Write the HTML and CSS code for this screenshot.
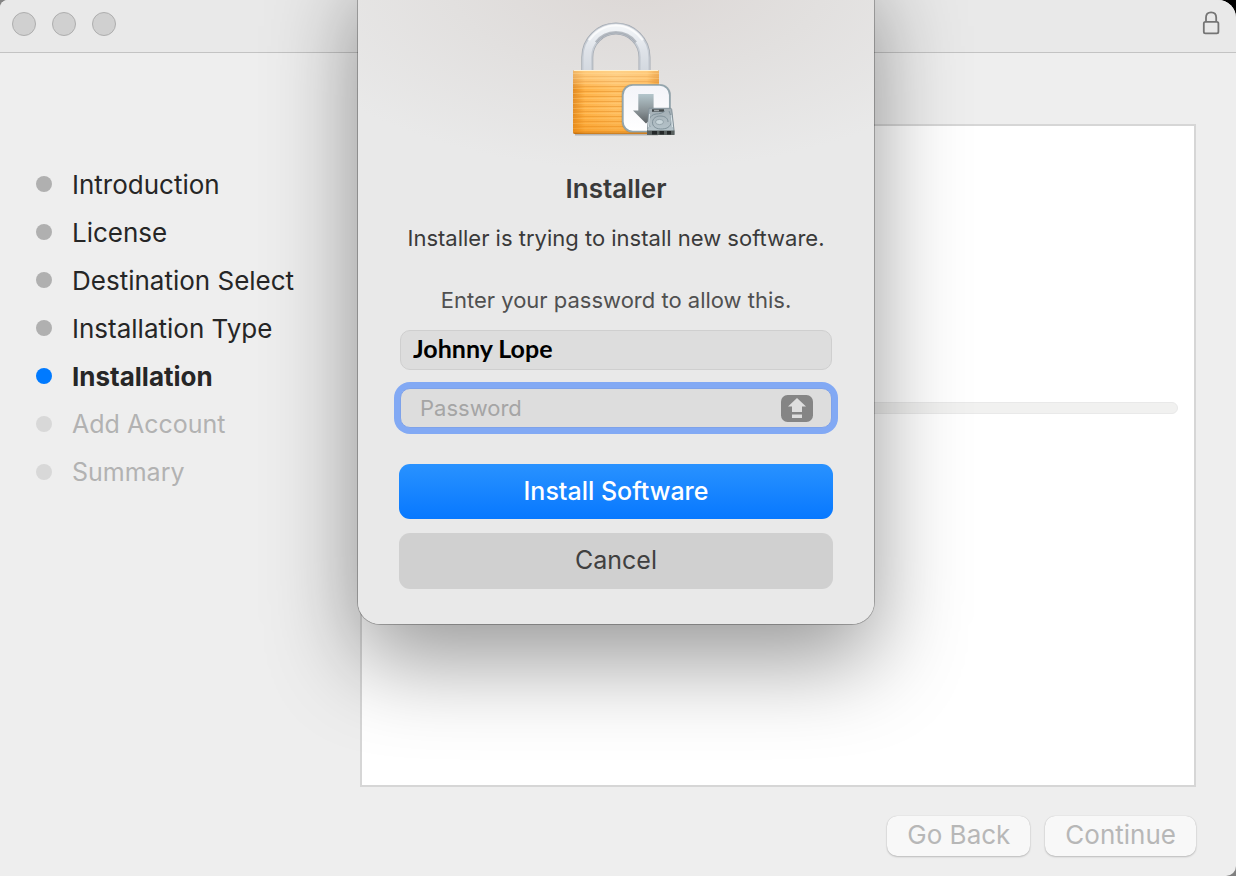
FILE: index.html
```
<!DOCTYPE html>
<html lang="en">
<head>
<meta charset="utf-8">
<meta name="viewport" content="width=device-width, initial-scale=1">
<title>Installer</title>
<link rel="stylesheet" href="styles.css">
</head>
<body>
<div class="window">
  <header class="titlebar">
    <div class="lights">
      <button class="light" type="button" aria-label="Close"></button>
      <button class="light" type="button" aria-label="Minimize"></button>
      <button class="light" type="button" aria-label="Zoom"></button>
    </div>
    <svg class="lock" width="20" height="26" viewBox="0 0 20 26" fill="none" stroke="#757575" stroke-width="1.8" aria-hidden="true">
      <rect x="2.8" y="10.8" width="14.6" height="11.6" rx="1.6"/>
      <path d="M5 10.500V6.600C5 3.300 7 1.300 10.100 1.300s5.100 2 5.100 5.300v3.900"/>
    </svg>
  </header>
  <div class="body">
    <nav class="sidebar" aria-label="Steps">
      <ol class="steps">
        <li class="step">Introduction</li>
        <li class="step">License</li>
        <li class="step">Destination Select</li>
        <li class="step">Installation Type</li>
        <li class="step step-current" aria-current="step">Installation</li>
        <li class="step step-pending">Add Account</li>
        <li class="step step-pending">Summary</li>
      </ol>
    </nav>
    <main class="main">
      <div class="panel"><div class="progress" role="progressbar" aria-label="Installation progress"></div></div>
      <div class="actions">
        <button class="nav-button" type="button" disabled>Go Back</button>
        <button class="nav-button" type="button" disabled>Continue</button>
      </div>
    </main>
  </div>
  <div class="overlay">
    <form class="dialog" role="dialog" aria-labelledby="dialog-title">
      <svg class="app-icon" width="122" height="118" viewBox="-13 0 122 118" aria-hidden="true">
        <defs>
          <linearGradient id="gold" x1="0" x2="1" y1="0" y2="0">
            <stop offset="0" stop-color="#e08a22"/><stop offset=".05" stop-color="#ee982a"/><stop offset=".14" stop-color="#ffb246"/><stop offset=".5" stop-color="#ffbf60"/><stop offset=".86" stop-color="#ffb44c"/><stop offset=".95" stop-color="#ee9220"/><stop offset="1" stop-color="#e48a1e"/>
          </linearGradient>
          <linearGradient id="shade" x1="0" x2="0" y1="0" y2="1">
            <stop offset="0" stop-color="#ffe3ad" stop-opacity=".5"/><stop offset=".3" stop-color="#fff" stop-opacity="0"/><stop offset=".7" stop-color="#f79a20" stop-opacity=".1"/><stop offset=".96" stop-color="#f08c10" stop-opacity=".4"/><stop offset="1" stop-color="#a65600" stop-opacity=".7"/>
          </linearGradient>
          <pattern id="ribs" width="8" height="5" patternUnits="userSpaceOnUse">
            <path d="M0 1.500h8" stroke="#e8932c" stroke-opacity=".6"/><path d="M0 3.500h8" stroke="#ffd083" stroke-opacity=".35"/>
          </pattern>
          <linearGradient id="metal" x1="0" x2="0" y1="0" y2="1">
            <stop offset="0" stop-color="#f1f4f7"/><stop offset=".5" stop-color="#dfe3e9"/><stop offset="1" stop-color="#d3d8df"/>
          </linearGradient>
          <linearGradient id="arrow" x1="0" x2="0" y1="0" y2="1">
            <stop offset="0" stop-color="#b4c6cc"/><stop offset=".6" stop-color="#879094"/><stop offset="1" stop-color="#5c6164"/>
          </linearGradient>
          <linearGradient id="tile" x1="0" x2="0" y1="0" y2="1">
            <stop offset="0" stop-color="#f3f4f9"/><stop offset="1" stop-color="#fff"/>
          </linearGradient>
          <linearGradient id="drive" x1="0" x2="0" y1="0" y2="1">
            <stop offset="0" stop-color="#a2adb3"/><stop offset="1" stop-color="#b9c8cf"/>
          </linearGradient>
        </defs>
        <path d="M19.300 51V37.200a28.600 28.600 0 0 1 57.200 0V51" fill="none" stroke="#a4aab2" stroke-width="12"/>
        <path d="M19.300 51V37.200a28.600 28.600 0 0 1 57.200 0V51" fill="none" stroke="#c6ccd4" stroke-width="10.500"/>
        <path d="M19.300 51V37.200a28.600 28.600 0 0 1 57.200 0V51" fill="none" stroke="url(#metal)" stroke-width="7.500"/>
        <path d="M20.900 20.200a31.900 31.900 0 0 1 54 0" fill="none" stroke="#fff" stroke-opacity=".7" stroke-width="2.500"/>
        <path d="M27.900 22.200a25 25 0 0 1 40 0" fill="none" stroke="#959ba4" stroke-opacity=".6" stroke-width="2.500"/>
        <path d="M7 114.500h83" stroke="#000" stroke-opacity=".22" stroke-width="2"/>
        <rect x="5" y="50" width="86" height="64" rx="2" fill="url(#gold)"/>
        <rect x="5" y="53" width="86" height="59" fill="url(#ribs)"/>
        <rect x="5" y="50" width="86" height="64" rx="2" fill="url(#shade)"/>
        <path d="M6 50.500h84" stroke="#fff1d0"/>
        <rect x="53.500" y="64" width="49.500" height="49" rx="11" fill="#68717a" fill-opacity=".3"/>
        <rect x="54.800" y="65" width="47" height="46.500" rx="10" fill="url(#tile)" stroke="#92a5ad" stroke-width="1.700"/>
        <path d="M70.300 74h15.300v16.500H91L78 103.500 65 90.500h5.300z" fill="url(#arrow)"/>
        <path d="M81 88.300h21.300q1.200 0 1.400 1.200l2.300 20.500v4.500H79.500v-5z" fill="url(#drive)" stroke="#84929a"/>
        <path d="M79 110.500h27.500v4.500H79z" fill="#59605f"/>
        <path d="M84 112.700h5M91.500 112.700h4.500M99 112.700h4" stroke="#252829" stroke-width="3.500"/>
        <path d="M84 90.500h12" stroke="#42484b" stroke-width="2.500"/>
        <path d="M86 90.500h5" stroke="#9ea5a8" stroke-width="1.500"/>
        <path d="M82 107c-2-6-1-12 6-13 3 0 7-1 9-3M101 91c3 7 4 14-2 17-6 2-12 1-14-3-2-5 2-9 7-9 6 0 8 3 8 6" fill="none" stroke="#7d8d96" stroke-width=".9"/>
        <ellipse cx="91.500" cy="102" rx="4" ry="2.600" fill="#c8d5da" stroke="#8a9aa2" stroke-width=".8"/>
        <path d="M81.500 94l-.8 13M103 95l1.500 12" stroke="#dce6ea"/>
      </svg>
      <h1 class="title" id="dialog-title">Installer</h1>
      <p class="message">Installer is trying to install new software.</p>
      <p class="message hint">Enter your password to allow this.</p>
      <input class="field name" type="text" aria-label="User name" value="Johnny Lope">
      <div class="password-wrap">
        <input class="field password" type="password" aria-label="Password" placeholder="Password">
        <svg class="caps" width="32" height="27" viewBox="0 0 32 27" aria-hidden="true">
          <rect width="32" height="27" rx="6.500" fill="#858585"/>
          <path d="M16 3l9 8.500h-4V17H11v-5.500H7zM11 19.500h10V23H11z" fill="#dedede"/>
        </svg>
      </div>
      <button class="button primary" type="submit">Install Software</button>
      <button class="button secondary" type="button">Cancel</button>
    </form>
  </div>
</div>
</body>
</html>
```
FILE: styles.css
```
* {
  box-sizing: border-box;
}

body {
  margin: 0;
  background: linear-gradient(90deg, #858585 50%, transparent 50%), linear-gradient(#000 50%, #808080 50%);
  color: #262626;
  font-family: Inter, "Liberation Sans", sans-serif;
}

button,
input {
  font: inherit;
}

.window {
  position: relative;
  display: flex;
  flex-direction: column;
  min-height: 100vh;
  overflow: hidden;
  border-radius: 8px 18px 10px 0;
  background: #eeeeee;
}

.titlebar {
  display: flex;
  align-items: center;
  justify-content: space-between;
  height: 53px;
  padding: 0 15px 5px 12px;
  border-bottom: 1px solid #c3c3c3;
  background: #e9e9e9;
}

.lights {
  display: flex;
  gap: 16px;
}

.light {
  width: 24px;
  height: 24px;
  padding: 0;
  border: 1px solid #aeaeae;
  border-radius: 50%;
  background: #d0d0d0;
}

.body {
  display: flex;
  flex: 1;
}

.sidebar {
  flex: 0 0 360px;
  padding: 107px 0 0 36px;
}

.steps {
  margin: 0;
  padding: 0;
  list-style: none;
}

.step {
  display: flex;
  align-items: center;
  gap: 20px;
  height: 48px;
  font-size: 26px;
}

.step::before {
  width: 16px;
  height: 16px;
  border-radius: 50%;
  background: #b0b0b0;
  content: "";
}

.step-current {
  font-weight: 700;
}

.step-current::before {
  background: #007aff;
}

.step-pending {
  color: #b2b2b2;
  font-size: 25px;
}

.step-pending::before {
  background: #d8d8d8;
}

.main {
  display: flex;
  flex: 1;
  flex-direction: column;
  padding: 71px 40px 20px 0;
}

.panel {
  flex: 1;
  padding: 276px 16px 0;
  border: 2px solid #d6d6d6;
  background: #ffffff;
}

.progress {
  height: 12px;
  border: 1px solid #e9e9e9;
  border-radius: 6px;
  background: #f1f1f0;
}

.actions {
  display: flex;
  justify-content: flex-end;
  gap: 15px;
  padding-top: 29px;
}

.nav-button {
  height: 40px;
  padding: 0 20px 2px;
  border: 0;
  border-radius: 10px;
  background: #f8f8f8;
  box-shadow: 0 0 1px #00000033, 0 1px 2px #00000033;
  color: #b7b7b7;
  font-size: 26px;
  line-height: 38px;
}

.overlay {
  position: absolute;
  inset: -40px 0 auto;
  display: flex;
  justify-content: center;
  padding-right: 4px;
}

.dialog {
  display: flex;
  flex-direction: column;
  align-items: center;
  width: 516px;
  padding: 60px 41px 35px;
  border-radius: 0 0 22px 22px;
  background: radial-gradient(ellipse 380px 190px at 54% 20px, #dcd7d5, #e2e0df 50%, #e9e9e9);
  box-shadow: 0 0 0 1px #00000040, 0 36px 90px #00000068;
}

.title {
  margin: 35px 0 0;
  color: #3a3a3a;
  font-size: 26px;
  font-weight: 600;
  line-height: 32px;
}

.message {
  margin: 19px 0 0;
  color: #3a3a3a;
  font-size: 22px;
  line-height: 28px;
  white-space: nowrap;
}

.hint {
  margin-top: 34px;
  color: #505050;
}

.field {
  width: 432px;
  height: 40px;
  border: 1px solid #cfcfcf;
  border-radius: 10px;
  outline: 0;
  background: #dddddd;
}

.name {
  margin-top: 16px;
  padding: 0 12px 4px;
  color: #000000;
  font-family: Lato, sans-serif;
  font-size: 25px;
  font-weight: 700;
}

.password-wrap {
  position: relative;
  margin-top: 18px;
}

.password {
  display: block;
  padding: 0 60px 0 19px;
  border-color: #7ea2ea;
  box-shadow: 0 0 0 6px #82a9f4;
  font-size: 22px;
}

.password::placeholder {
  color: #a5a5a5;
  opacity: 1;
}

.caps {
  position: absolute;
  top: 7px;
  right: 19px;
}

.button {
  width: 100%;
  height: 56px;
  padding: 0 0 2px;
  border: 0;
  border-radius: 11px;
  font-size: 25px;
}

.primary {
  height: 55px;
  margin-top: 36px;
  background: linear-gradient(#2992ff, #0778ff);
  color: #ffffff;
  font-weight: 500;
}

.secondary {
  margin-top: 14px;
  background: #d0d0d0;
  color: #404040;
}
```
